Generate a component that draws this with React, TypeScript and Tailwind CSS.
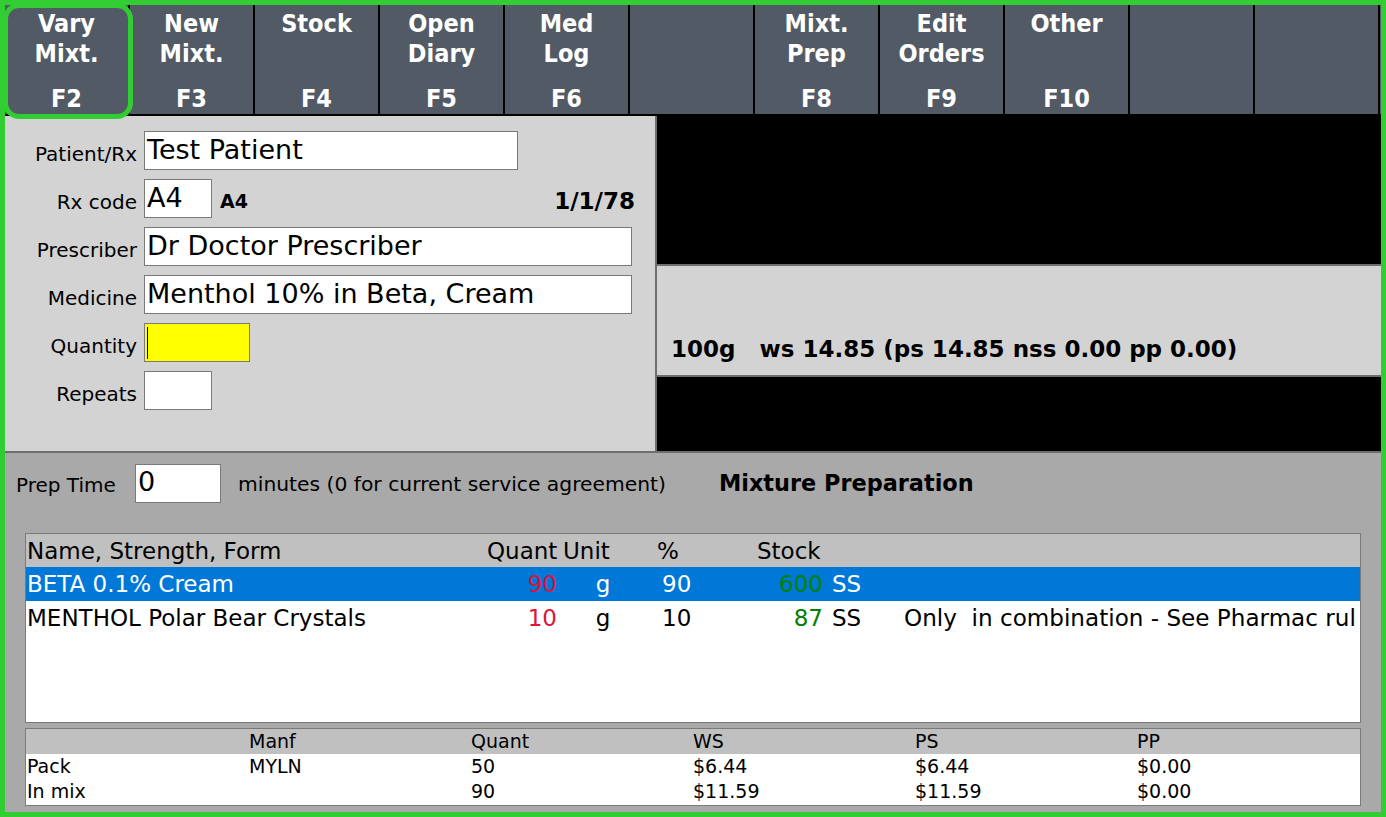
import React from 'react';

const font = { fontFamily: '"DejaVu Sans", Verdana, sans-serif' };
const keyFont = { fontFamily: '"DejaVu Sans Condensed", "DejaVu Sans", sans-serif' };

const keys = [
  { label: ['Vary', 'Mixt.'], key: 'F2' },
  { label: ['New', 'Mixt.'], key: 'F3' },
  { label: ['Stock'], key: 'F4' },
  { label: ['Open', 'Diary'], key: 'F5' },
  { label: ['Med', 'Log'], key: 'F6' },
  { label: [], key: '' },
  { label: ['Mixt.', 'Prep'], key: 'F8' },
  { label: ['Edit', 'Orders'], key: 'F9' },
  { label: ['Other'], key: 'F10' },
  { label: [], key: '' },
  { label: [], key: '' },
];

const mixRows = [
  { name: 'BETA 0.1% Cream', quant: '90', unit: 'g', pct: '90', stock: '600', note: '', selected: true },
  {
    name: 'MENTHOL Polar Bear Crystals',
    quant: '10',
    unit: 'g',
    pct: '10',
    stock: '87',
    note: 'Only\u00a0 in combination - See Pharmac rul',
    selected: false,
  },
];

const costRows = [
  ['Pack', 'MYLN', '50', '$6.44', '$6.44', '$0.00'],
  ['In mix', '', '90', '$11.59', '$11.59', '$0.00'],
];

function Field({ label, children }: { label: string; children: React.ReactNode }) {
  return (
    <div className="flex h-[39px] items-center">
      <span className="w-[132px] pt-[6px] text-right text-[20px] text-black">{label}</span>
      <div className="ml-[7px] flex flex-1 items-center">{children}</div>
    </div>
  );
}

function TextBox({ value, className }: { value: string; className: string }) {
  return (
    <div
      className={`h-[39px] border border-[#7a7a7a] bg-white pl-[2px] text-[27px] leading-[36px] text-black ${className}`}
    >
      {value}
    </div>
  );
}

export default function App() {
  return (
    <div className="h-[817px] w-[1386px] overflow-hidden bg-[#32cd32] p-[5px]" style={font}>
      <div className="relative flex h-full flex-col">
        {/* function key bar */}
        <div className="flex h-[111px] border-b-2 border-black bg-[#525b65]" style={keyFont}>
          {keys.map((k, i) => (
            <div
              key={i}
              className="flex w-[125px] shrink-0 flex-col items-center border-r-2 border-black pt-[4px] text-[25px] font-bold leading-[30px] text-white"
            >
              {k.label.map(l => (
                <span key={l}>{l}</span>
              ))}
              <span className="mt-auto">{k.key}</span>
            </div>
          ))}
        </div>
        <div className="absolute -top-[2px] -left-[2px] h-[116px] w-[130px] rounded-[16px] border-[5px] border-[#32cd32]" />

        {/* upper panels */}
        <div className="flex h-[337px] border-b-2 border-[#6e6e6e]">
          <div className="flex w-[652px] flex-col gap-[9px] border-r-2 border-[#6e6e6e] bg-[#d3d3d3] pt-[15px]">
            <Field label="Patient/Rx">
              <TextBox value="Test Patient" className="w-[374px]" />
            </Field>
            <Field label="Rx code">
              <TextBox value="A4" className="w-[68px]" />
              <span className="ml-[8px] pt-[6px] text-[19px] font-bold">A4</span>
              <span className="mr-[20px] ml-auto pt-[6px] text-[23px] font-bold">1/1/78</span>
            </Field>
            <Field label="Prescriber">
              <TextBox value="Dr Doctor Prescriber" className="w-[488px]" />
            </Field>
            <Field label="Medicine">
              <TextBox value="Menthol 10% in Beta, Cream" className="w-[488px]" />
            </Field>
            <Field label="Quantity">
              <div className="flex h-[39px] w-[106px] items-center border border-[#7a7a7a] bg-[#ffff00] pl-[2px]">
                <span className="h-[32px] w-px bg-black" />
              </div>
            </Field>
            <Field label="Repeats">
              <TextBox value="" className="w-[68px]" />
            </Field>
          </div>
          <div className="flex flex-1 flex-col">
            <div className="h-[148px] bg-black" />
            <div className="flex h-[113px] items-end border-y-2 border-[#6e6e6e] bg-[#d3d3d3] pb-[9px] pl-[14px]">
              <span className="text-[23px] font-bold whitespace-pre text-black">
                {'100g   ws 14.85 (ps 14.85 nss 0.00 pp 0.00)'}
              </span>
            </div>
            <div className="flex-1 bg-black" />
          </div>
        </div>

        {/* mixture preparation */}
        <div className="flex flex-1 flex-col bg-[#a9a9a9] px-[20px] pt-[11px] pb-[6px]">
          <div className="-ml-[9px] flex h-[39px] items-center text-[20px] text-black">
            <span className="w-[119px] pt-[3px]">Prep Time</span>
            <div className="h-[39px] w-[86px] border border-[#7a7a7a] bg-white pl-[2px] text-[27px] leading-[34px]">
              0
            </div>
            <span className="ml-[17px] pt-[1px] text-[20.3px]">minutes (0 for current service agreement)</span>
            <span className="ml-[53px] pt-[1px] text-[22.4px] font-bold">Mixture Preparation</span>
          </div>

          <div className="mt-[30px] h-[190px] w-[1336px] overflow-hidden border border-[#7a7a7a] bg-white text-[23px] leading-[34px]">
            <div className="flex h-[33px] bg-[#c0c0c0] pl-[1px] text-black">
              <span className="w-[460px]">Name, Strength, Form</span>
              <span className="w-[76px]">Quant</span>
              <span className="w-[94px]">Unit</span>
              <span className="w-[100px]">%</span>
              <span>Stock</span>
            </div>
            {mixRows.map(r => (
              <div
                key={r.name}
                className={`flex h-[34px] pl-[1px] whitespace-nowrap ${r.selected ? 'bg-[#0078d7] text-white' : 'text-black'}`}
              >
                <span className="w-[460px] shrink-0">{r.name}</span>
                <span className="w-[70px] shrink-0 text-right text-[#dc143c]">{r.quant}</span>
                <span className="w-[92px] shrink-0 text-center">{r.unit}</span>
                <span className="w-[60px] shrink-0 pl-[13px]">{r.pct}</span>
                <span className="w-[114px] shrink-0 text-right text-[#008000]">{r.stock}</span>
                <span className="ml-[9px] w-[72px] shrink-0">SS</span>
                <span className="w-[454px] shrink-0 text-[23.1px]">{r.note}</span>
              </div>
            ))}
          </div>

          <div className="mt-[5px] flex-1 overflow-hidden border border-[#7a7a7a] bg-white text-[19px] leading-[25px] text-black">
            <div className="grid h-[25px] grid-cols-[222px_222px_222px_222px_222px_1fr] bg-[#c0c0c0] pl-[1px]">
              <span />
              <span>Manf</span>
              <span>Quant</span>
              <span>WS</span>
              <span>PS</span>
              <span>PP</span>
            </div>
            {costRows.map(r => (
              <div key={r[0]} className="grid grid-cols-[222px_222px_222px_222px_222px_1fr] pl-[1px]">
                {r.map((c, i) => (
                  <span key={i}>{c}</span>
                ))}
              </div>
            ))}
          </div>
        </div>
      </div>
    </div>
  );
}
